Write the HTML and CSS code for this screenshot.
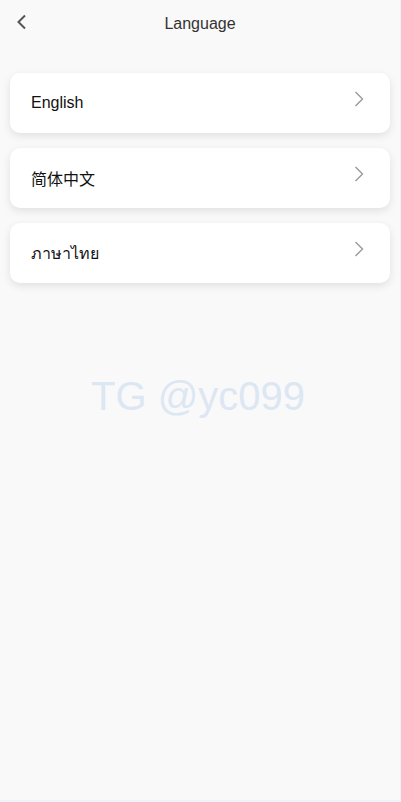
FILE: index.html
```html
<!DOCTYPE html>
<html lang="en">
<head>
    <meta charset="UTF-8">
    <meta name="viewport" content="width=device-width, initial-scale=1.0">
    <title>Language</title>
    <link rel="stylesheet" href="styles.css">
</head>
<body>
    <div class="app">
        <header class="nav-bar">
            <button class="back-btn" aria-label="Back">
                <svg width="12" height="16" viewBox="0 0 12 16"><path d="M9 1.5L2.5 8L9 14.5" fill="none" stroke="#555" stroke-width="2"/></svg>
            </button>
            <h1 class="nav-title">Language</h1>
        </header>

        <ul class="lang-list">
            <li class="lang-item">
                <span>English</span>
                <svg class="arrow" width="10" height="16" viewBox="0 0 10 16"><path d="M1.5 1L8.5 8L1.5 15" fill="none" stroke="#999" stroke-width="1.4"/></svg>
            </li>
            <li class="lang-item">
                <span>简体中文</span>
                <svg class="arrow" width="10" height="16" viewBox="0 0 10 16"><path d="M1.5 1L8.5 8L1.5 15" fill="none" stroke="#999" stroke-width="1.4"/></svg>
            </li>
            <li class="lang-item">
                <span>ภาษาไทย</span>
                <svg class="arrow" width="10" height="16" viewBox="0 0 10 16"><path d="M1.5 1L8.5 8L1.5 15" fill="none" stroke="#999" stroke-width="1.4"/></svg>
            </li>
        </ul>

        <div class="watermark">TG @yc099</div>
    </div>
</body>
</html>
```

FILE: styles.css
```css
body {
    margin: 0;
    background: #eef3f8;
    font-family: "Liberation Sans", Arial, "Noto Sans CJK SC", sans-serif;
}
.app {
    width: 400px;
    height: 800px;
    background: #f9f9f9;
    position: relative;
}
.nav-bar {
    height: 46px;
    display: flex;
    align-items: center;
    justify-content: center;
    position: relative;
}
.back-btn {
    position: absolute;
    left: 14px;
    top: 14px;
    padding: 0;
    border: none;
    background: none;
    width: 16px;
    height: 16px;
    display: flex;
    align-items: center;
    justify-content: center;
}
.nav-title {
    margin: 2px 0 0;
    font-size: 16px;
    font-weight: normal;
    color: #333;
}
.lang-list {
    list-style: none;
    margin: 0;
    padding: 27px 10px 0;
    display: flex;
    flex-direction: column;
    gap: 15px;
}
.lang-item {
    height: 60px;
    background: #fff;
    border-radius: 10px;
    box-shadow: 0 3px 8px rgba(0, 0, 0, 0.1);
    display: flex;
    align-items: center;
    justify-content: space-between;
    padding: 0 26px 0 21px;
    font-size: 16px;
    color: #111;
}
.lang-item .arrow {
    margin-top: -8px;
}
.watermark {
    text-align: center;
    margin-top: 91px;
    padding-right: 4px;
    font-size: 40px;
    color: #dce7f3;
}
```
